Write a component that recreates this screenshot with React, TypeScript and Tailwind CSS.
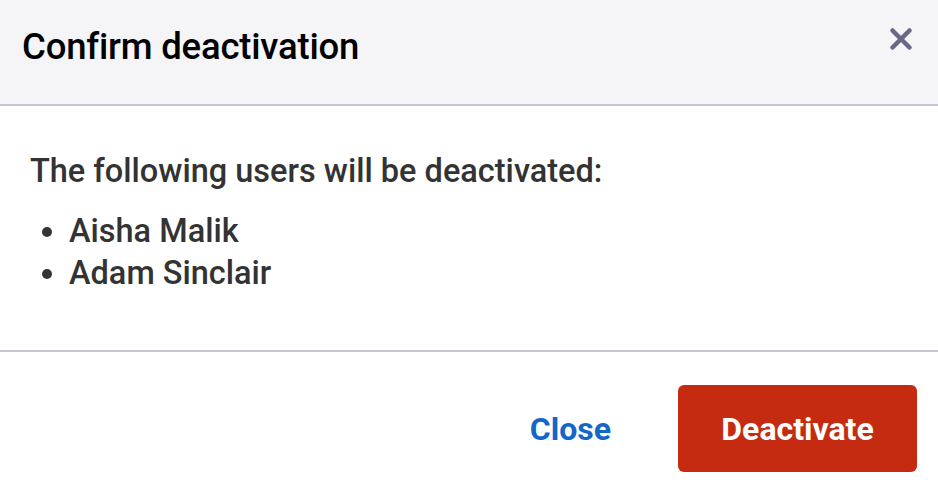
import { X } from 'lucide-react';

const users = ['Aisha Malik', 'Adam Sinclair'];

export default function App() {
  return (
    <div className="w-[938px] h-[493px] bg-white flex flex-col font-['Roboto',_sans-serif] overflow-hidden">
      <div className="h-[106px] shrink-0 flex items-center justify-between pl-[22px] pr-[20px] bg-[#f5f5f7] border-b-2 border-[#c6c6d4]">
        <h1 className="text-[36.5px] font-medium text-black tracking-[-0.2px] leading-[44px] pb-[10px]">Confirm deactivation</h1>
        <button className="text-[#6b6788] -mt-[26px]">
          <X size={34} strokeWidth={3.2} />
        </button>
      </div>
      <div className="h-[246px] shrink-0 px-[30px] pt-[44px] border-b-2 border-[#c6c6d4] text-[#333333]">
        <p className="text-[32.5px] font-medium leading-[42px]">The following users will be deactivated:</p>
        <ul className="mt-[18px] list-disc pl-[39px] text-[32.5px] font-medium leading-[42px]">
          {users.map((u) => (
            <li key={u}>{u}</li>
          ))}
        </ul>
      </div>
      <div className="flex-1 flex items-center justify-end pr-[21px] pt-[12px] gap-[67px]">
        <button className="text-[#1466c8] text-[32px] font-bold">Close</button>
        <button className="w-[239px] h-[87px] rounded-[6px] bg-[#c42b10] text-white text-[32px] font-bold">
          Deactivate
        </button>
      </div>
    </div>
  );
}
